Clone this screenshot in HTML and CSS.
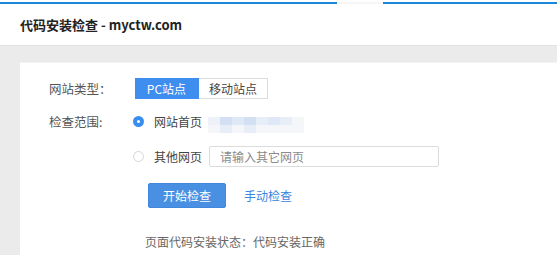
FILE: index.html
```html
<!DOCTYPE html>
<html lang="zh-CN">
<head>
    <meta charset="UTF-8">
    <title>代码安装检查 - myctw.com</title>
    <link rel="stylesheet" href="styles.css">
</head>
<body>
    <div class="header">
        <div class="topline">
            <span class="line line-a"></span>
            <span class="line-gap"></span>
            <span class="line line-b"></span>
        </div>
        <h1>代码安装检查 - myctw.com</h1>
    </div>

    <div class="main">
        <div class="card">
            <div class="row row-type">
                <div class="label">网站类型：</div>
                <div class="switch">
                    <span class="switch-item active">PC站点</span>
                    <span class="switch-item">移动站点</span>
                </div>
            </div>

            <div class="row row-range">
                <div class="label">检查范围:</div>
                <div class="option">
                    <span class="radio checked"></span>
                    <span class="option-text">网站首页</span>
                    <span class="blur">
                        <i class="b1"></i><i class="b2"></i><i class="b3"></i><i class="b2"></i><i class="b4"></i><i class="b3"></i><i class="b4"></i><i class="b5"></i>
                        <i class="b5"></i><i class="b4"></i><i class="b5"></i><i class="b4"></i><i class="b5"></i><i class="b5"></i><i class="b5"></i><i class="b5"></i>
                    </span>
                </div>
            </div>

            <div class="row row-other">
                <div class="label"></div>
                <div class="option">
                    <span class="radio"></span>
                    <span class="option-text">其他网页</span>
                    <input class="url-input" type="text" placeholder="请输入其它网页">
                </div>
            </div>

            <div class="row row-actions">
                <div class="label"></div>
                <div class="actions">
                    <button class="btn-start">开始检查</button>
                    <a class="link-manual" href="#">手动检查</a>
                </div>
            </div>

            <div class="row row-status">
                <div class="label"></div>
                <div class="status">页面代码安装状态：代码安装正确</div>
            </div>
        </div>
    </div>
</body>
</html>
```

FILE: styles.css
```css
:root {
    --primary-color: #3e8ef0;
    --button-color: #4a90e2;
    --link-color: #3a86e0;
    --text-color: #444444;
    --muted-color: #666666;
    --border-color: #dcdcdc;
    --page-background: #ebebeb;
}

* {
    margin: 0;
    padding: 0;
    box-sizing: border-box;
}

body {
    font-family: "Microsoft YaHei", "Noto Sans CJK SC", "Noto Sans", sans-serif;
    font-size: 12px;
    color: var(--text-color);
    background-color: var(--page-background);
    height: 255px;
    overflow: hidden;
}

/* header */
.header {
    background-color: #fff;
    height: 45px;
    padding-top: 2px;
}

.topline {
    display: flex;
    height: 2px;
}

.line {
    background-color: #1a88d8;
}

.line-a {
    width: 337px;
}

.line-gap {
    width: 46px;
    background-color: #f6f6f6;
}

.line-b {
    flex: 1;
}

.header h1 {
    font-size: 13px;
    font-weight: 700;
    color: #222;
    padding: 12px 0 0 20px;
    line-height: 18px;
}

/* main area */
.main {
    border-top: 1px solid #e1e1e1;
    padding: 16px 0 0 20px;
    height: 210px;
}

.card {
    background-color: #fff;
    border-top: 1px solid #f3f3f3;
    height: 100%;
    padding: 15px 0 0 29px;
}

.row {
    display: grid;
    grid-template-columns: 86px 1fr;
    align-items: center;
}

.label {
    color: #555;
    font-size: 12.5px;
}

.row-range {
    margin-top: 12px;
}

.row-other {
    margin-top: 14px;
}

.row-actions {
    margin-top: 16px;
}

.row-status {
    margin-top: 25px;
}

/* segmented switch */
.switch {
    display: flex;
    height: 21px;
}

.switch-item {
    display: flex;
    align-items: center;
    justify-content: center;
    width: 69px;
    border: 1px solid var(--border-color);
    border-left: none;
    color: #444;
}

.switch-item.active {
    width: 64px;
    background-color: var(--primary-color);
    border-color: var(--primary-color);
    color: #fff;
}

/* radio options */
.option {
    display: flex;
    align-items: center;
    height: 21px;
    margin-left: -2px;
}

.radio {
    width: 11px;
    height: 11px;
    border-radius: 50%;
    border: 1px solid #d6d6d6;
    margin-right: 10px;
}

.radio.checked {
    border: 4px solid #3a8ef0;
}

.option-text {
    color: #444;
}

.blur {
    display: grid;
    grid-template-columns: repeat(8, 12px);
    grid-template-rows: 8px 8px;
    margin: 6px 0 0 6px;
}

.blur i {
    display: block;
}

.b1 { background-color: #eef2f8; }
.b2 { background-color: #d3e0f4; }
.b3 { background-color: #dfe8f6; }
.b4 { background-color: #e8eef8; }
.b5 { background-color: #f4f6fa; }

.url-input {
    width: 230px;
    height: 21px;
    margin-left: 7px;
    border: 1px solid var(--border-color);
    border-radius: 2px;
    padding-left: 10px;
    font-family: inherit;
    font-size: 12px;
    outline: none;
}

.url-input::placeholder {
    color: #8a8a8a;
}

/* actions */
.actions {
    display: flex;
    align-items: center;
    padding-left: 13px;
}

.btn-start {
    width: 78px;
    height: 25px;
    background-color: var(--button-color);
    border: 1px solid #4187dd;
    border-radius: 2px;
    color: #fff;
    font-family: inherit;
    font-size: 12px;
}

.link-manual {
    margin-left: 18px;
    color: var(--link-color);
    text-decoration: none;
}

.status {
    padding-left: 10px;
    color: var(--muted-color);
}
```
